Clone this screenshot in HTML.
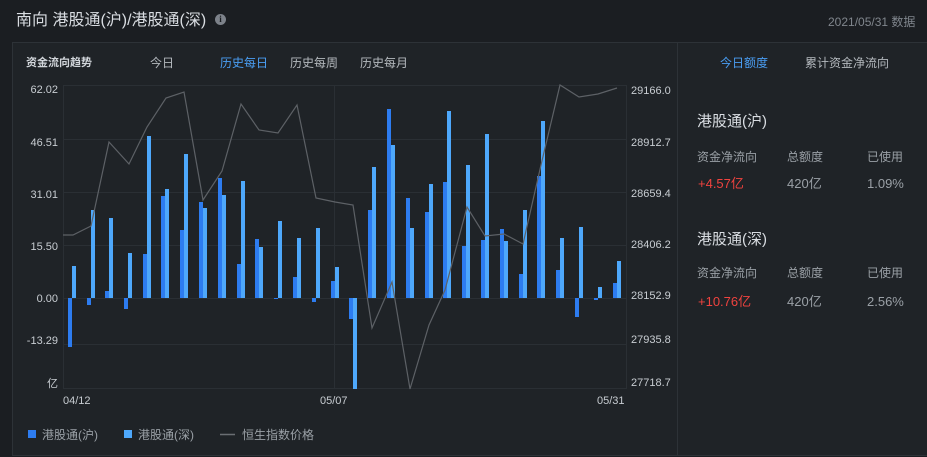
<!DOCTYPE html>
<html><head><meta charset="utf-8"><style>
*{margin:0;padding:0;box-sizing:border-box}
body{width:927px;height:457px;background:#1b1e22;font-family:"Liberation Sans","Noto Sans CJK SC",sans-serif;position:relative;overflow:hidden;color:#b4b9be}
.a{position:absolute;white-space:nowrap;line-height:16px}
</style></head><body>
<div class="a" style="left:16px;top:12px;font-size:16px;line-height:18px;color:#d9dde2">南向 港股通(沪)/港股通(深)</div>
<div class="a" style="left:215px;top:14px;width:11px;height:11px;border-radius:50%;background:#7d828a;color:#1b1e22;font-size:9px;font-weight:bold;text-align:center;line-height:11px;font-family:'Liberation Serif',serif">i</div>
<div class="a" style="left:828px;top:14px;font-size:12px;color:#80868d">2021/05/31 数据</div>
<div class="a" style="left:12px;top:42px;width:920px;height:414px;background:#1f2327;border:1px solid #2d3237"></div>
<div class="a" style="left:677px;top:43px;width:1px;height:413px;background:#2d3237"></div>
<div class="a" style="left:26px;top:55px;font-size:11px;font-weight:bold;color:#d2d6db">资金流向趋势</div>
<div class="a" style="left:150px;top:55px;font-size:12px">今日</div>
<div class="a" style="left:220px;top:55px;font-size:12px;color:#4a9ff5">历史每日</div>
<div class="a" style="left:290px;top:55px;font-size:12px">历史每周</div>
<div class="a" style="left:360px;top:55px;font-size:12px">历史每月</div>
<div class="a" style="left:720px;top:55px;font-size:12px;color:#4a9ff5">今日额度</div>
<div class="a" style="left:805px;top:55px;font-size:12px">累计资金净流向</div>

<div class="a" style="left:697px;top:113px;font-size:15px;line-height:18px;color:#d9dde2">港股通(沪)</div>
<div class="a" style="left:697px;top:149px;font-size:12px;color:#9aa0a6">资金净流向</div>
<div class="a" style="left:787px;top:149px;font-size:12px;color:#9aa0a6">总额度</div>
<div class="a" style="left:867px;top:149px;font-size:12px;color:#9aa0a6">已使用</div>
<div class="a" style="left:698px;top:176px;font-size:13px;color:#f0433f">+4.57亿</div>
<div class="a" style="left:787px;top:176px;font-size:13px;color:#9aa0a6">420亿</div>
<div class="a" style="left:867px;top:176px;font-size:13px;color:#9aa0a6">1.09%</div>

<div class="a" style="left:697px;top:231px;font-size:15px;line-height:18px;color:#d9dde2">港股通(深)</div>
<div class="a" style="left:697px;top:265px;font-size:12px;color:#9aa0a6">资金净流向</div>
<div class="a" style="left:787px;top:265px;font-size:12px;color:#9aa0a6">总额度</div>
<div class="a" style="left:867px;top:265px;font-size:12px;color:#9aa0a6">已使用</div>
<div class="a" style="left:698px;top:294px;font-size:13px;color:#f0433f">+10.76亿</div>
<div class="a" style="left:787px;top:294px;font-size:13px;color:#9aa0a6">420亿</div>
<div class="a" style="left:867px;top:294px;font-size:13px;color:#9aa0a6">2.56%</div>

<svg class="a" style="left:0;top:0" width="927" height="457">
<g stroke="#2a2f34" stroke-width="1">
<line x1="63" y1="85.5" x2="627" y2="85.5"/><line x1="63" y1="139.5" x2="627" y2="139.5"/><line x1="63" y1="192.5" x2="627" y2="192.5"/><line x1="63" y1="245.5" x2="627" y2="245.5"/><line x1="63" y1="298.5" x2="627" y2="298.5"/><line x1="63" y1="344.5" x2="627" y2="344.5"/><line x1="63" y1="388.5" x2="627" y2="388.5"/>
<line x1="63.5" y1="85" x2="63.5" y2="389"/><line x1="334.5" y1="85" x2="334.5" y2="389"/><line x1="626.5" y1="85" x2="626.5" y2="389"/>
</g>
<g font-size="11" fill="#c8cdd2" text-anchor="end">
<text x="58" y="93">62.02</text><text x="58" y="146">46.51</text><text x="58" y="198">31.01</text><text x="58" y="250">15.50</text><text x="58" y="302">0.00</text><text x="58" y="344">-13.29</text><text x="58" y="387">亿</text>
</g>
<g font-size="11" fill="#c8cdd2">
<text x="631" y="94">29166.0</text><text x="631" y="146">28912.7</text><text x="631" y="197">28659.4</text><text x="631" y="248">28406.2</text><text x="631" y="299">28152.9</text><text x="631" y="343">27935.8</text><text x="631" y="386">27718.7</text>
<text x="63" y="404">04/12</text><text x="320" y="404">05/07</text><text x="597" y="404">05/31</text>
</g>
<g fill="#2d7cf0">
<rect x="68" y="298" width="4" height="49"/><rect x="87" y="298" width="4" height="7"/><rect x="105" y="291" width="4" height="7"/><rect x="124" y="298" width="4" height="11"/><rect x="143" y="254" width="4" height="44"/><rect x="161" y="196" width="4" height="102"/><rect x="180" y="230" width="4" height="68"/><rect x="199" y="202" width="4" height="96"/><rect x="218" y="178" width="4" height="120"/><rect x="237" y="264" width="4" height="34"/><rect x="255" y="239" width="4" height="59"/><rect x="274" y="298" width="4" height="1"/><rect x="293" y="277" width="4" height="21"/><rect x="312" y="298" width="4" height="4"/><rect x="331" y="281" width="4" height="17"/>
<rect x="349" y="298" width="4" height="21"/><rect x="368" y="210" width="4" height="88"/><rect x="387" y="109" width="4" height="189"/><rect x="406" y="198" width="4" height="100"/><rect x="425" y="212" width="4" height="86"/><rect x="443" y="182" width="4" height="116"/><rect x="462" y="246" width="4" height="52"/><rect x="481" y="240" width="4" height="58"/><rect x="500" y="229" width="4" height="69"/><rect x="519" y="274" width="4" height="24"/><rect x="537" y="176" width="4" height="122"/><rect x="556" y="270" width="4" height="28"/><rect x="575" y="298" width="4" height="19"/><rect x="594" y="298" width="4" height="2"/><rect x="613" y="283" width="4" height="15"/>
</g>
<g fill="#4ea8fb">
<rect x="72" y="266" width="4" height="32"/><rect x="91" y="210" width="4" height="88"/><rect x="109" y="218" width="4" height="80"/><rect x="128" y="253" width="4" height="45"/><rect x="147" y="136" width="4" height="162"/><rect x="165" y="189" width="4" height="109"/><rect x="184" y="154" width="4" height="144"/><rect x="203" y="208" width="4" height="90"/><rect x="222" y="195" width="4" height="103"/><rect x="241" y="181" width="4" height="117"/><rect x="259" y="247" width="4" height="51"/><rect x="278" y="221" width="4" height="77"/><rect x="297" y="238" width="4" height="60"/><rect x="316" y="228" width="4" height="70"/><rect x="335" y="267" width="4" height="31"/>
<rect x="353" y="298" width="4" height="91"/><rect x="372" y="167" width="4" height="131"/><rect x="391" y="145" width="4" height="153"/><rect x="410" y="228" width="4" height="70"/><rect x="429" y="184" width="4" height="114"/><rect x="447" y="111" width="4" height="187"/><rect x="466" y="165" width="4" height="133"/><rect x="485" y="134" width="4" height="164"/><rect x="504" y="241" width="4" height="57"/><rect x="523" y="210" width="4" height="88"/><rect x="541" y="121" width="4" height="177"/><rect x="560" y="238" width="4" height="60"/><rect x="579" y="227" width="4" height="71"/><rect x="598" y="287" width="4" height="11"/><rect x="617" y="261" width="4" height="37"/>
</g>
<polyline fill="none" stroke="#5d6166" stroke-width="1.2" points="63,235 73,235 91,226 109,142 129,164 147,127 166,98 184,92 203,200 222,171 241,104 259,130 278,133 297,105 316,198 335,202 353,205 372,328 392,282 410,389 429,325 445,290 467,207 485,236 504,234 523,244 541,165 560,85 579,97 598,94 617,88"/>
<rect x="28" y="430" width="8" height="8" fill="#2d7cf0"/>
<rect x="124" y="430" width="8" height="8" fill="#4ea8fb"/>
<line x1="220" y1="434.5" x2="235" y2="434.5" stroke="#6a6e73" stroke-width="1.5"/>
<g font-size="12" fill="#9aa0a6"><text x="42" y="439">港股通(沪)</text><text x="138" y="439">港股通(深)</text><text x="242" y="439">恒生指数价格</text></g>
</svg>
</body></html>
